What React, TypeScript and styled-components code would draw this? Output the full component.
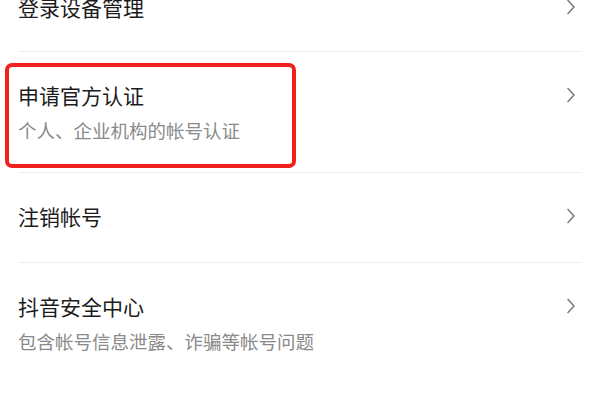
import React from "react"
import styled, { createGlobalStyle } from "styled-components"

const GlobalStyle = createGlobalStyle`
  html, body {
    margin: 0;
    padding: 0;
    background: #ffffff;
  }
  body {
    width: 600px;
    height: 420px;
    overflow: hidden;
    font-family: "Noto Sans CJK SC", "Noto Sans", sans-serif;
  }
`

type Item = { title: string; desc?: string; marked?: boolean }

const items: Item[] = [
  { title: "登录设备管理" },
  { title: "申请官方认证", desc: "个人、企业机构的帐号认证", marked: true },
  { title: "注销帐号" },
  { title: "抖音安全中心", desc: "包含帐号信息泄露、诈骗等帐号问题" },
]

const Chevron = () => (
  <svg width="10" height="16" viewBox="0 0 10 16" fill="none">
    <path d="M2 1.5L8 8L2 14.5" stroke="#7f7f7f" strokeWidth="1.7" strokeLinecap="round" strokeLinejoin="round" />
  </svg>
)

export default function App() {
  return (
    <S.Page>
      <GlobalStyle />
      <S.List>
        {items.map((it) => (
          <S.Row key={it.title} tall={!!it.desc}>
            <S.Texts>
              <S.Title>{it.title}</S.Title>
              {it.desc && <S.Desc>{it.desc}</S.Desc>}
            </S.Texts>
            <S.Arrow>
              <Chevron />
            </S.Arrow>
            {it.marked && <S.Mark />}
          </S.Row>
        ))}
      </S.List>
    </S.Page>
  )
}

const S = {
  Page: styled.div`
    width: 600px;
    height: 420px;
    overflow: hidden;
    background: #fff;
  `,
  List: styled.div`
    display: flex;
    flex-direction: column;
    margin: -36px 18px 0 18px;
  `,
  Row: styled.div<{ tall: boolean }>`
    position: relative;
    display: flex;
    align-items: flex-start;
    justify-content: space-between;
    padding: ${({ tall }) => (tall ? "30px 0 30px" : "30px 0 33px")};
    border-bottom: 1px solid #eeeeee;

    &:first-child {
      padding-bottom: 31px;
    }

    &:last-child {
      border-bottom: none;
    }
  `,
  Texts: styled.div`
    display: flex;
    flex-direction: column;
    gap: 10px;
  `,
  Title: styled.div`
    font-size: 21px;
    line-height: 26px;
    color: #1c1c1c;
  `,
  Desc: styled.div`
    font-size: 18.5px;
    line-height: 24px;
    color: #8a8a8a;
  `,
  Arrow: styled.div`
    display: flex;
    align-items: center;
    height: 26px;
    margin-right: 6px;
  `,
  Mark: styled.div`
    position: absolute;
    left: -13px;
    top: 11px;
    width: 291px;
    height: 105px;
    box-sizing: border-box;
    border: 4.5px solid #f0201c;
    border-radius: 7px;
  `,
}
